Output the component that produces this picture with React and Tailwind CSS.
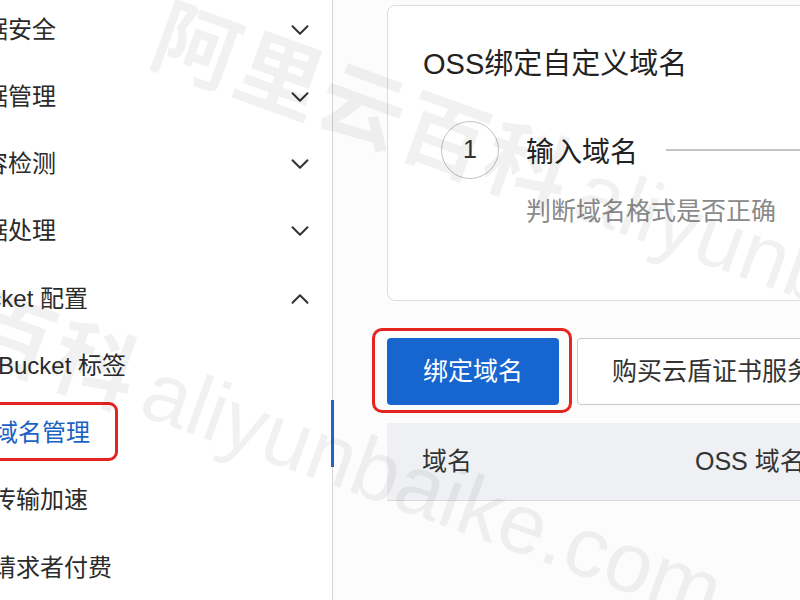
import React from 'react';
import { ChevronDown, ChevronUp } from 'lucide-react';

const font = { fontFamily: '"Liberation Sans", "Noto Sans CJK SC", sans-serif' };

const menu = [
  { label: '数据安全', top: true, icon: 'down' },
  { label: '数据管理', top: true, icon: 'down' },
  { label: '内容检测', top: true, icon: 'down' },
  { label: '数据处理', top: true, icon: 'down' },
  { label: 'Bucket 配置', top: true, icon: 'up' },
  { label: 'Bucket 标签', offset: 'ml-[-2px]' },
  { label: '域名管理', offset: 'ml-[-6px]', active: true },
  { label: '传输加速', offset: 'ml-[-8px]' },
  { label: '请求者付费', offset: 'ml-[-8px]' },
];

function Sidebar() {
  return (
    <aside className="relative w-[333px] shrink-0 border-r border-[#d6d6d6] bg-white">
      <div className="mt-[-4px] flex flex-col">
        {menu.map((m) => (
          <div key={m.label} className="flex h-[67.25px] items-center justify-between pr-[17px]">
            <span
              className={`relative whitespace-nowrap text-[24px] leading-8 ${m.top ? 'ml-[-40px]' : m.offset} ${
                m.active ? 'text-[#1a62c4]' : 'text-[#2b2b2b]'
              }`}
            >
              {m.label}
              {m.active && (
                <span className="absolute -left-[18px] -right-[28px] -top-[15px] -bottom-[12px] rounded-[9px] border-[3px] border-[#e5231f]" />
              )}
            </span>
            {m.icon === 'down' && <ChevronDown size={30} strokeWidth={1.6} className="text-[#333]" />}
            {m.icon === 'up' && <ChevronUp size={30} strokeWidth={1.6} className="text-[#333]" />}
          </div>
        ))}
      </div>
      {/* scroll indicator */}
      <div className="absolute right-[-2px] top-[400px] h-[67px] w-[3px] bg-[#1f66c8]" />
    </aside>
  );
}

function Main() {
  return (
    <main className="min-w-0 flex-1 overflow-hidden pl-[54px] pt-[5px]">
      <div className="h-[296px] w-[480px] rounded-lg border border-[#dcdcdc] bg-white pl-[35px] pt-[38px]">
        <h1 className="text-[29px] leading-10 text-[#222]">OSS绑定自定义域名</h1>
        <div className="mt-[37px] flex items-start pl-[18px]">
          <div className="flex h-[58px] w-[58px] shrink-0 items-center justify-center rounded-full border-[1.5px] border-[#c2c2c2] text-[25px] text-[#333]">
            1
          </div>
          <div className="ml-[27px] flex-1">
            <div className="flex h-[58px] items-center">
              <span className="pt-[6px] text-[28px] leading-9 text-[#222]">输入域名</span>
              <div className="ml-[28px] h-[1.5px] flex-1 bg-[#c4c4c4]" />
            </div>
            <div className="mt-[16px] text-[25px] leading-8 text-[#8a8a8a]">判断域名格式是否正确</div>
          </div>
        </div>
      </div>

      <div className="mt-[37px] flex items-center gap-[18px]">
        <div className="relative">
          <button className="h-[67px] w-[172px] rounded-[4px] bg-[#1766d0] text-[25px] text-white">绑定域名</button>
          <span className="absolute -left-[15px] -right-[13px] -top-[10px] -bottom-[8px] rounded-[10px] border-[3.5px] border-[#e5231f]" />
        </div>
        <button className="h-[67px] w-[300px] shrink-0 whitespace-nowrap rounded-[4px] border-[1.5px] border-[#c9c9c9] bg-white pl-[34px] text-left text-[25px] text-[#333]">
          购买云盾证书服务
        </button>
      </div>

      <div className="mt-[18px] flex h-[78px] w-[480px] items-center border-b border-[#dadada] bg-[#eef0f3] text-[25px] text-[#333]">
        <div className="w-[308px] pl-[35px]">域名</div>
        <div className="whitespace-nowrap">OSS 域名</div>
      </div>
    </main>
  );
}

function Watermark() {
  const line = (
    <>
      <span className="font-bold tracking-[3px]" style={{ fontFamily: '"Noto Sans CJK SC", sans-serif' }}>阿里云百科</span>
      <span className="ml-[10px]" style={{ fontFamily: '"Liberation Sans", sans-serif' }}>aliyunbaike.com</span>
    </>
  );
  return (
    <div className="pointer-events-none absolute inset-0 overflow-hidden">
      <div className="absolute left-[158px] top-[-17px] origin-left rotate-[20deg] whitespace-nowrap text-[85px] leading-[85px] text-black/[0.055]">
        {line}
      </div>
      <div className="absolute left-[-275px] top-[182px] origin-left rotate-[20deg] whitespace-nowrap text-[85px] leading-[85px] text-black/[0.055]">
        {line}
      </div>
    </div>
  );
}

export default function App() {
  return (
    <div className="relative flex h-[600px] w-[800px] overflow-hidden bg-[#fcfcfc]" style={font}>
      <Sidebar />
      <Main />
      <Watermark />
    </div>
  );
}
